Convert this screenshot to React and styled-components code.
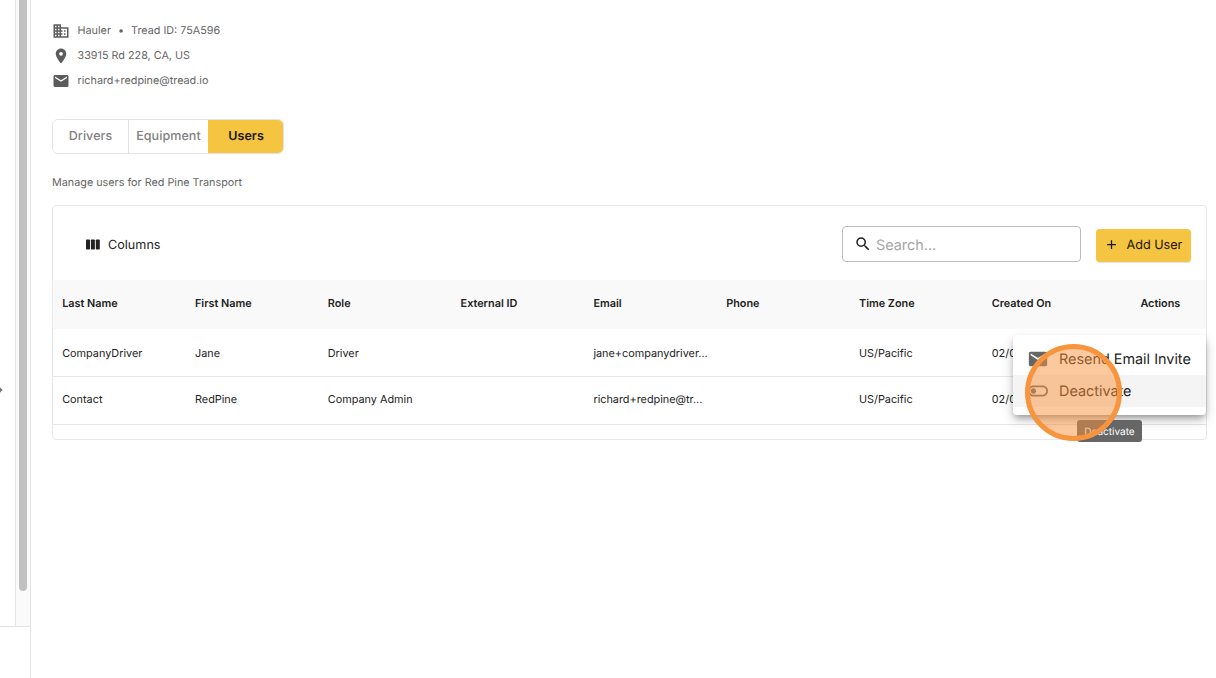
import React from "react";
import styled, { createGlobalStyle } from "styled-components";
import { MdAdd, MdBusiness, MdEmail, MdOutlineToggleOff, MdPlace, MdSearch } from "react-icons/md";

const columns = ["Last Name", "First Name", "Role", "External ID", "Email", "Phone", "Time Zone", "Created On"];

const users = [
  ["CompanyDriver", "Jane", "Driver", "", "jane+companydriver...", "", "US/Pacific", "02/0"],
  ["Contact", "RedPine", "Company Admin", "", "richard+redpine@tr...", "", "US/Pacific", "02/0"],
];

const App = () => {
  return (
    <>
      <GlobalStyle />
      <Page>
        <Sidebar>
          <SidebarPanel>
            <SidebarContent>
              <Caret viewBox="0 0 4 8">
                <path d="M0 1.2L2.6 4L0 6.8Z" />
              </Caret>
            </SidebarContent>
            <ScrollTrack>
              <ScrollThumb />
            </ScrollTrack>
          </SidebarPanel>
        </Sidebar>

        <Main>
          <Details>
            <Detail>
              <MdBusiness />
              <span>Hauler</span>
              <Bullet>•</Bullet>
              <span>Tread ID: 75A596</span>
            </Detail>
            <Detail>
              <MdPlace />
              <span>33915 Rd 228, CA, US</span>
            </Detail>
            <Detail>
              <MdEmail />
              <span>richard+redpine@tread.io</span>
            </Detail>
          </Details>

          <Tabs>
            <Tab $width={75}>Drivers</Tab>
            <Tab $width={80}>Equipment</Tab>
            <Tab $width={75} $active>Users</Tab>
          </Tabs>

          <Description>Manage users for Red Pine Transport</Description>

          <Card>
            <Toolbar>
              <ColumnsButton>
                <ColumnsIcon viewBox="0 0 14 11">
                  <rect x="0" y="0.5" width="4" height="10" rx="0.8" />
                  <rect x="4.9" y="0.5" width="4" height="10" rx="0.8" />
                  <rect x="9.8" y="0.5" width="4" height="10" rx="0.8" />
                </ColumnsIcon>
                <span>Columns</span>
              </ColumnsButton>
              <Search>
                <MdSearch />
                <SearchInput placeholder="Search..." />
              </Search>
              <AddButton>
                <MdAdd />
                <span>Add User</span>
              </AddButton>
            </Toolbar>

            <HeaderRow>
              {columns.map((name) => (
                <Cell key={name}>{name}</Cell>
              ))}
              <ActionsCell>Actions</ActionsCell>
            </HeaderRow>
            {users.map((user) => (
              <Row key={user[0]}>
                {user.map((value, j) => (
                  <Cell key={j}>{value}</Cell>
                ))}
              </Row>
            ))}
          </Card>
        </Main>

        <Menu>
          <MenuItem>
            <MdEmail />
            <span>Resend Email Invite</span>
          </MenuItem>
          <MenuItem $hovered>
            <MdOutlineToggleOff />
            <span>Deactivate</span>
          </MenuItem>
        </Menu>
        <Tooltip>Deactivate</Tooltip>
        <ClickMarker />
      </Page>
    </>
  );
};

const GlobalStyle = createGlobalStyle`
  * {
    box-sizing: border-box;
  }

  body {
    margin: 0;
    background: #fff;
    font-family: Inter, sans-serif;
    color: #222;
    overflow: hidden;
    text-rendering: geometricPrecision;
  }

  button, input {
    text-rendering: inherit;
  }
`;

const Page = styled.div`
  position: relative;
  display: flex;
  width: 1216px;
  height: 678px;
  overflow: hidden;
`;

const Sidebar = styled.aside`
  width: 31px;
  height: 100%;
  border-right: 1px solid #e4e4e4;
`;

const SidebarPanel = styled.div`
  display: flex;
  height: 627px;
  border-bottom: 1px solid #e2e2e2;
`;

const SidebarContent = styled.div`
  width: 15px;
  padding-top: 386px;
`;

const Caret = styled.svg`
  display: block;
  width: 4px;
  height: 8px;
  fill: #777;
`;

const ScrollTrack = styled.div`
  width: 15px;
  padding-left: 3px;
  background: #fafafa;
  border-left: 1px solid #e6e6e6;
`;

const ScrollThumb = styled.div`
  width: 8px;
  height: 591px;
  border-radius: 0 0 4px 4px;
  background: #c1c1c1;
`;

const Main = styled.main`
  width: 1176px;
  padding: 18px 0 0 21px;
`;

const Details = styled.div`
  display: flex;
  flex-direction: column;
`;

const Detail = styled.div`
  display: flex;
  align-items: center;
  height: 25px;
  font-size: 10.8px;
  color: #666;

  svg {
    width: 18px;
    height: 18px;
    margin-right: 7.5px;
    color: #5c5c5c;
  }

  span {
    padding-bottom: 1px;
  }
`;

const Bullet = styled.span`
  margin: 0 7px;
`;

const Tabs = styled.div`
  display: flex;
  width: 232px;
  height: 35px;
  margin-top: 26px;
  border: 1px solid #e3e3e3;
  border-radius: 6px;
  overflow: hidden;
`;

const Tab = styled.button`
  flex: 1 0 ${(props) => props.$width}px;
  padding: 0 0 1px;
  border: 0;
  border-left: 1px solid ${(props) => (props.$active ? "#f5c440" : "#e3e3e3")};
  background: ${(props) => (props.$active ? "#f5c440" : "#fff")};
  color: ${(props) => (props.$active ? "#1c1608" : "#808080")};
  font-family: inherit;
  font-size: 12.5px;
  font-weight: ${(props) => (props.$active ? 600 : 500)};
  letter-spacing: 0.08px;

  &:first-child {
    border-left: 0;
  }
`;

const Description = styled.p`
  margin: 21px 0 0;
  font-size: 10.8px;
  line-height: 16px;
  color: #666;
`;

const Card = styled.section`
  width: 1155px;
  height: 235px;
  margin-top: 14px;
  border: 1px solid #e8e8e8;
  border-radius: 4px;
`;

const Toolbar = styled.div`
  display: flex;
  align-items: center;
  height: 74px;
  padding: 2px 15px 0 33px;
`;

const ColumnsButton = styled.div`
  display: flex;
  align-items: center;
  flex: 1;
  gap: 8px;
  padding-top: 1px;
  font-size: 12.6px;
  letter-spacing: 0.02px;

  span {
    padding-top: 1px;
  }
`;

const ColumnsIcon = styled.svg`
  width: 14px;
  height: 11px;
  fill: #222;
`;

const Search = styled.div`
  display: flex;
  align-items: center;
  width: 239px;
  height: 36px;
  margin-right: 15px;
  padding-left: 11px;
  border: 1px solid #bcbcbc;
  border-radius: 4px;

  svg {
    width: 18px;
    height: 18px;
    margin-right: 4px;
  }
`;

const SearchInput = styled.input`
  width: 180px;
  padding: 2px 0 0;
  border: 0;
  outline: 0;
  font-family: inherit;
  font-size: 14.4px;

  &::placeholder {
    color: #a5a5a5;
  }
`;

const AddButton = styled.button`
  display: flex;
  align-items: center;
  gap: 8px;
  width: 95px;
  height: 33px;
  margin-top: 2px;
  padding: 0 0 1px 7.5px;
  border: 0;
  border-radius: 4px;
  background: #f5c440;
  box-shadow: 0 1px 1px rgba(0, 0, 0, 0.12);
  color: #1c1608;
  font-family: inherit;
  font-size: 12.6px;
  white-space: nowrap;

  svg {
    width: 15px;
    height: 15px;
  }

  span {
    padding-top: 1px;
  }
`;

const Row = styled.div`
  display: grid;
  grid-template-columns: repeat(8, 132.8px) 1fr;
  align-items: center;
  height: 48px;
  border-bottom: 1px solid #e6e6e6;
  font-size: 10.85px;

  &:last-child {
    padding-bottom: 3px;
  }
`;

const HeaderRow = styled(Row)`
  height: 49px;
  padding-bottom: 3px;
  border-bottom: 0;
  background: #f9f9f9;
  font-weight: 600;
`;

const Cell = styled.div`
  padding-left: 9.2px;
  line-height: 14px;
  white-space: nowrap;
`;

const ActionsCell = styled(Cell)`
  padding-left: 25px;
`;

const Menu = styled.div`
  position: absolute;
  top: 335px;
  left: 1013px;
  width: 193px;
  height: 80px;
  padding: 8px 0;
  border-radius: 4px;
  background: #fff;
  box-shadow: 0 4px 6px -2px rgba(0, 0, 0, 0.3), 0 5px 12px rgba(0, 0, 0, 0.2);
`;

const MenuItem = styled.div`
  display: flex;
  align-items: center;
  gap: 10px;
  height: 32px;
  padding-left: 14px;
  background: ${(props) => (props.$hovered ? "#f4f4f4" : "#fff")};
  font-size: 14.4px;
  white-space: nowrap;

  svg {
    flex: none;
    width: 22px;
    height: 22px;
    color: #666;
  }

  span {
    padding-top: 1px;
  }
`;

const Tooltip = styled.div`
  position: absolute;
  top: 420px;
  left: 1077px;
  width: 65px;
  height: 22px;
  border-radius: 3px;
  background: #666;
  color: #fff;
  font-size: 10px;
  line-height: 24px;
  text-align: center;
`;

const ClickMarker = styled.div`
  position: absolute;
  top: 344px;
  left: 1025px;
  width: 97px;
  height: 97px;
  border: 5px solid #f7943e;
  border-radius: 50%;
  background: rgba(250, 146, 60, 0.5);
`;

export default App;
